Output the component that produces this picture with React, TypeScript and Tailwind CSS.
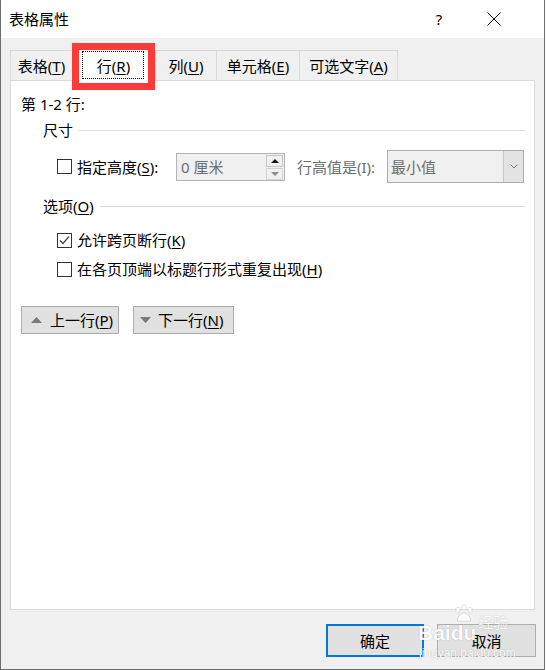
import React from "react";

const U = ({ c }: { c: string }) => <span className="underline underline-offset-[2px] decoration-1">{c}</span>;

function Checkbox({ checked }: { checked?: boolean }) {
  return (
    <div className="w-[15px] h-[15px] border border-[#333333] bg-white flex items-center justify-center shrink-0">
      {checked && (
        <svg width="11" height="11" viewBox="0 0 11 11">
          <polyline points="1,5.5 4,8.5 10,1.5" fill="none" stroke="#444" strokeWidth="1.2" />
        </svg>
      )}
    </div>
  );
}

function Tab({ children, w, last }: { children: React.ReactNode; w: string; last?: boolean }) {
  return (
    <div className={`${w} h-[30px] border-t border-l ${last ? "border-r" : ""} border-[#d9d9d9] flex items-center justify-center text-black whitespace-nowrap`}>
      {children}
    </div>
  );
}

export default function App() {
  return (
    <div className="w-[546px] h-[670px] bg-white font-['Noto_Sans','Noto_Sans_CJK_SC',sans-serif] text-[15px] leading-[20px] text-black">
      <div className="relative w-[545px] h-[670px] border-l border-r border-b border-[#6e6e6e] bg-[#f0f0f0] flex flex-col overflow-hidden">
        {/* Title bar */}
        <div className="h-[38px] bg-white flex items-center pl-[8px] shrink-0">
          <span className="text-[15px]">表格属性</span>
          <div className="flex-1" />
          <span className="w-[20px] text-center mr-[38px]">?</span>
          <svg width="14" height="14" viewBox="0 0 14 14" className="mr-[43px]">
            <line x1="0.5" y1="0.5" x2="13.5" y2="13.5" stroke="#000" strokeWidth="1" />
            <line x1="13.5" y1="0.5" x2="0.5" y2="13.5" stroke="#000" strokeWidth="1" />
          </svg>
        </div>

        {/* Body */}
        <div className="pl-[9px] pt-[12px] flex flex-col">
          {/* Tabs */}
          <div className="flex h-[30px] relative z-10">
            <Tab w="w-[62px]">表格(<U c="T" />)</Tab>
            <div className="relative w-[83px] h-[31px] bg-white flex items-center justify-center whitespace-nowrap">
              <div className="absolute left-[10px] top-[1px] w-[62px] h-[28px] border border-dotted border-black" />
              <span className="relative">行(<U c="R" />)</span>
              <div className="absolute left-0 top-[-7px] w-[83px] h-[47px] border-[7px] border-[#fb3a3a]" />
            </div>
            <Tab w="w-[61px]">列(<U c="U" />)</Tab>
            <Tab w="w-[83px]">单元格(<U c="E" />)</Tab>
            <Tab w="w-[99px]" last>可选文字(<U c="A" />)</Tab>
          </div>

          {/* Panel */}
          <div className="w-[525px] h-[530px] border border-[#d9d9d9] bg-white flex flex-col pl-[10px] pr-[9px] pt-[13px] whitespace-nowrap">
            <div className="h-[20px]">第 1-2 行:</div>

            <div className="mt-[6px] h-[20px] flex items-center pl-[22px]">
              <span>尺寸</span>
              <div className="flex-1 ml-[6px] h-px bg-[#dcdcdc]" />
            </div>

            <div className="mt-[10px] h-[33px] flex items-center pl-[36px]">
              <Checkbox />
              <span className="ml-[5px] w-[99px] shrink-0">指定高度(<U c="S" />):</span>
              <div className="relative w-[109px] h-[28px] shrink-0 border border-[#b4b4b4] bg-[#f0f0f0] flex items-center pl-[4px] text-[#6d6d6d]">
                <span>0 厘米</span>
                <div className="absolute right-[1px] top-[1px] w-[17px] flex flex-col gap-[1px]">
                  <div className="h-[12px] border border-[#c4c4c4] bg-[#f0f0f0] flex items-center justify-center">
                    <svg width="8" height="4" viewBox="0 0 8 4"><polygon points="0,4 8,4 4,0" fill="#111" /></svg>
                  </div>
                  <div className="h-[12px] border border-[#d4d4d4] bg-[#f0f0f0] flex items-center justify-center">
                    <svg width="8" height="4" viewBox="0 0 8 4"><polygon points="0,0 8,0 4,4" fill="#8a8a8a" /></svg>
                  </div>
                </div>
              </div>
              <span className="ml-[12px] w-[90px] shrink-0 text-[#6d6d6d]">行高值是(I):</span>
              <div className="w-[137px] h-[33px] shrink-0 border border-[#adadad] bg-[#f0f0f0] flex items-center text-[#6d6d6d]">
                <span className="pl-[3px] flex-1">最小值</span>
                <div className="w-[20px] h-full border-l border-[#c8c8c8] bg-[#e3e3e3] flex items-center justify-center">
                  <svg width="8" height="5" viewBox="0 0 8 5"><polyline points="0.5,0.5 4,4 7.5,0.5" fill="none" stroke="#7a7a7a" strokeWidth="1" /></svg>
                </div>
              </div>
            </div>

            <div className="mt-[13px] h-[20px] flex items-center pl-[22px]">
              <span>选项(<U c="O" />)</span>
              <div className="flex-1 ml-[6px] h-px bg-[#dcdcdc]" />
            </div>

            <div className="mt-[14px] h-[20px] flex items-center pl-[36px]">
              <Checkbox checked />
              <span className="ml-[5px]">允许跨页断行(<U c="K" />)</span>
            </div>

            <div className="mt-[9px] h-[20px] flex items-center pl-[36px]">
              <Checkbox />
              <span className="ml-[5px]">在各页顶端以标题行形式重复出现(<U c="H" />)</span>
            </div>

            <div className="mt-[27px] flex gap-[14px]">
              <div className="w-[98px] h-[28px] border border-[#adadad] bg-[#e1e1e1] flex items-center pl-[9px]">
                <svg width="11" height="6" viewBox="0 0 11 6"><polygon points="0,6 11,6 5.5,0" fill="#7a7a7a" /></svg>
                <span className="ml-[8px]">上一行(<U c="P" />)</span>
              </div>
              <div className="w-[101px] h-[28px] border border-[#adadad] bg-[#e1e1e1] flex items-center pl-[6px]">
                <svg width="11" height="6" viewBox="0 0 11 6"><polygon points="0,0 11,0 5.5,6" fill="#7a7a7a" /></svg>
                <span className="ml-[7px]">下一行(<U c="N" />)</span>
              </div>
            </div>
          </div>

          {/* Bottom buttons */}
          <div className="mt-[14px] flex justify-end pr-[8px] gap-[13px]">
            <div className="w-[98px] h-[33px] border-2 border-[#0078d7] bg-[#e1e1e1] flex items-center justify-center">确定</div>
            <div className="w-[99px] h-[33px] border border-[#adadad] bg-[#e1e1e1] flex items-center justify-center">取消</div>
          </div>
        </div>

        {/* Watermark */}
        <div className="absolute left-[417px] top-[604px] w-[110px] flex flex-col items-start text-white whitespace-nowrap [text-shadow:0_0_1px_rgba(0,0,0,0.3)] pointer-events-none opacity-90">
          <div className="flex items-end h-[40px]">
            <span className="font-['Liberation_Sans',sans-serif] font-bold text-[21px] leading-[22px]">Bai</span>
            <div className="flex flex-col items-center">
              <svg width="20" height="18" viewBox="0 0 20 18">
                <g fill="white" stroke="rgba(0,0,0,0.2)" strokeWidth="0.6">
                  <ellipse cx="4" cy="6" rx="2.3" ry="2.8" />
                  <ellipse cx="10" cy="3.2" rx="2.3" ry="2.8" />
                  <ellipse cx="16" cy="6" rx="2.3" ry="2.8" />
                  <path d="M3.5 17 Q3 11 10 9 Q17 11 16.5 17 Z" />
                </g>
              </svg>
              <span className="font-['Liberation_Sans',sans-serif] font-bold text-[21px] leading-[22px]">du</span>
            </div>
            <span className="ml-[2px] mb-[14px] font-['Noto_Sans_CJK_SC',sans-serif] text-[15px] leading-[16px]">经验</span>
          </div>
          <div className="font-['Liberation_Sans',sans-serif] text-[12px] leading-[14px] ml-[1px] mt-[2px]">jingyan.baidu.com</div>
        </div>
      </div>
    </div>
  );
}
